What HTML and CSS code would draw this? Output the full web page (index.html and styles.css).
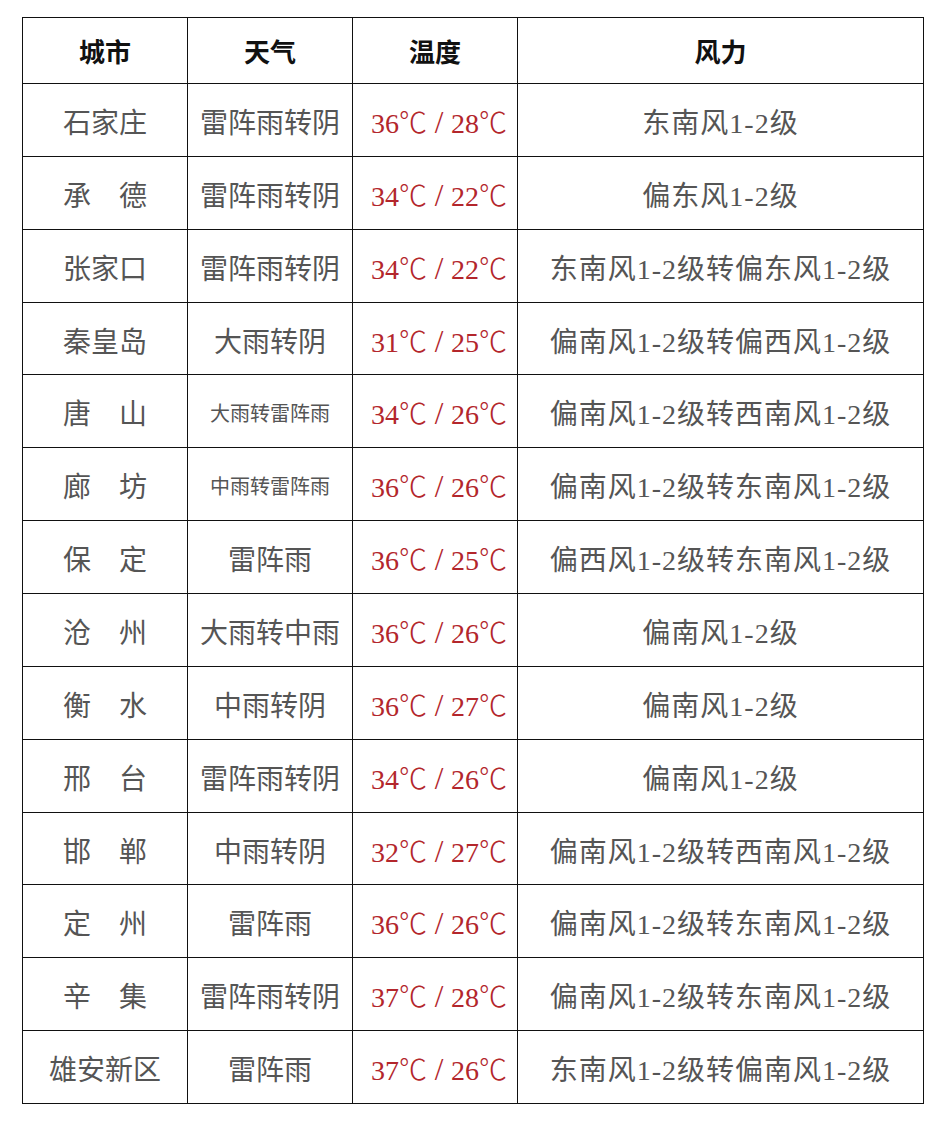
FILE: index.html
```html
<!DOCTYPE html>
<html lang="zh-CN">
<head>
<meta charset="utf-8">
<title>天气预报</title>
<link rel="stylesheet" href="styles.css">
</head>
<body>
<table class="wx">
  <colgroup>
    <col class="c-city"><col class="c-wx"><col class="c-temp"><col class="c-wind">
  </colgroup>
  <thead>
    <tr><th>城市</th><th>天气</th><th>温度</th><th>风力</th></tr>
  </thead>
  <tbody>
    <tr><td>石家庄</td><td>雷阵雨转阴</td><td class="t">36<span class="u">℃</span><span class="s">/</span>28<span class="u">℃</span></td><td class="w">东南风1-2级</td></tr>
    <tr><td>承　德</td><td>雷阵雨转阴</td><td class="t">34<span class="u">℃</span><span class="s">/</span>22<span class="u">℃</span></td><td class="w">偏东风1-2级</td></tr>
    <tr><td>张家口</td><td>雷阵雨转阴</td><td class="t">34<span class="u">℃</span><span class="s">/</span>22<span class="u">℃</span></td><td class="w">东南风1-2级转偏东风1-2级</td></tr>
    <tr><td>秦皇岛</td><td>大雨转阴</td><td class="t">31<span class="u">℃</span><span class="s">/</span>25<span class="u">℃</span></td><td class="w">偏南风1-2级转偏西风1-2级</td></tr>
    <tr><td>唐　山</td><td class="sm">大雨转雷阵雨</td><td class="t">34<span class="u">℃</span><span class="s">/</span>26<span class="u">℃</span></td><td class="w">偏南风1-2级转西南风1-2级</td></tr>
    <tr><td>廊　坊</td><td class="sm">中雨转雷阵雨</td><td class="t">36<span class="u">℃</span><span class="s">/</span>26<span class="u">℃</span></td><td class="w">偏南风1-2级转东南风1-2级</td></tr>
    <tr><td>保　定</td><td>雷阵雨</td><td class="t">36<span class="u">℃</span><span class="s">/</span>25<span class="u">℃</span></td><td class="w">偏西风1-2级转东南风1-2级</td></tr>
    <tr><td>沧　州</td><td>大雨转中雨</td><td class="t">36<span class="u">℃</span><span class="s">/</span>26<span class="u">℃</span></td><td class="w">偏南风1-2级</td></tr>
    <tr><td>衡　水</td><td>中雨转阴</td><td class="t">36<span class="u">℃</span><span class="s">/</span>27<span class="u">℃</span></td><td class="w">偏南风1-2级</td></tr>
    <tr><td>邢　台</td><td>雷阵雨转阴</td><td class="t">34<span class="u">℃</span><span class="s">/</span>26<span class="u">℃</span></td><td class="w">偏南风1-2级</td></tr>
    <tr><td>邯　郸</td><td>中雨转阴</td><td class="t">32<span class="u">℃</span><span class="s">/</span>27<span class="u">℃</span></td><td class="w">偏南风1-2级转西南风1-2级</td></tr>
    <tr><td>定　州</td><td>雷阵雨</td><td class="t">36<span class="u">℃</span><span class="s">/</span>26<span class="u">℃</span></td><td class="w">偏南风1-2级转东南风1-2级</td></tr>
    <tr><td>辛　集</td><td>雷阵雨转阴</td><td class="t">37<span class="u">℃</span><span class="s">/</span>28<span class="u">℃</span></td><td class="w">偏南风1-2级转东南风1-2级</td></tr>
    <tr><td>雄安新区</td><td>雷阵雨</td><td class="t">37<span class="u">℃</span><span class="s">/</span>26<span class="u">℃</span></td><td class="w">东南风1-2级转偏南风1-2级</td></tr>
  </tbody>
</table>
</body>
</html>
```

FILE: styles.css
```css
html, body {
  margin: 0;
  background: #ffffff;
}
body {
  padding: 17px 0 0 22px;
  font-family: "Liberation Serif", "Noto Sans CJK SC", serif;
}
.wx {
  border-collapse: collapse;
  table-layout: fixed;
  width: 901px;
}
.c-city, .c-wx, .c-temp { width: 165px; }
.c-wind { width: 406px; }
.wx th, .wx td {
  border: 1px solid #111;
  text-align: center;
  vertical-align: middle;
  padding: 0;
  white-space: nowrap;
}
.wx th {
  height: 65px;
  font-size: 26px;
  font-weight: 700;
  color: #111;
}
.wx td {
  height: 69.86px;
  padding-top: 2px;
  font-size: 28px;
  color: #555;
}
.wx td.sm {
  font-size: 20px;
}
.wx td.w {
  font-size: 28px;
  letter-spacing: 1px;
}
.wx td.t {
  color: #b3262c;
  font-size: 28px;
  padding-left: 8px;
}
.t .u {
  font-family: "Noto Sans CJK SC", sans-serif;
  font-weight: 300;
}
.t .s {
  display: inline-block;
  width: 24px;
  text-align: center;
  font-family: "Liberation Serif", serif;
  font-size: 31px;
}
```
